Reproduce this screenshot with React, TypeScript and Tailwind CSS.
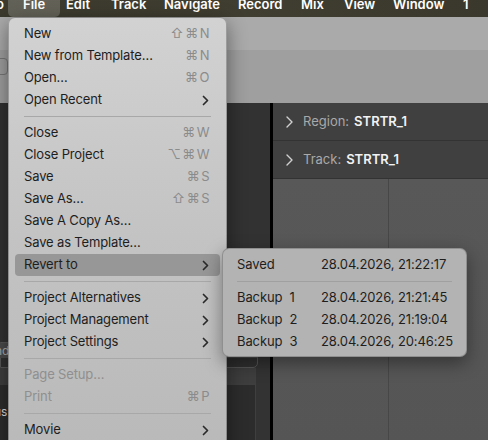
import React from "react";

type Item =
  | { sep: true }
  | { sep?: false; label: string; keys?: string; sub?: boolean; disabled?: boolean; active?: boolean };

const fileMenu: Item[] = [
  { label: "New", keys: "⇧⌘N" },
  { label: "New from Template…", keys: "⌘N" },
  { label: "Open…", keys: "⌘O" },
  { label: "Open Recent", sub: true },
  { sep: true },
  { label: "Close", keys: "⌘W" },
  { label: "Close Project", keys: "⌥⌘W" },
  { label: "Save", keys: "⌘S" },
  { label: "Save As…", keys: "⇧⌘S" },
  { label: "Save A Copy As…" },
  { label: "Save as Template…" },
  { label: "Revert to", sub: true, active: true },
  { sep: true },
  { label: "Project Alternatives", sub: true },
  { label: "Project Management", sub: true },
  { label: "Project Settings", sub: true },
  { sep: true },
  { label: "Page Setup…", disabled: true },
  { label: "Print", keys: "⌘P", disabled: true },
  { sep: true },
  { label: "Movie", sub: true },
];

const backups = [
  { label: "Backup\u00a0\u00a01", date: "28.04.2026, 21:21:45" },
  { label: "Backup\u00a0\u00a02", date: "28.04.2026, 21:19:04" },
  { label: "Backup\u00a0\u00a03", date: "28.04.2026, 20:46:25" },
];

// menu bar titles with the width each one takes up to the next title
const menuBar = [
  { name: "Edit", w: "w-[45px]" },
  { name: "Track", w: "w-[53px]" },
  { name: "Navigate", w: "w-[74px]" },
  { name: "Record", w: "w-[63px]" },
  { name: "Mix", w: "w-[43px]" },
  { name: "View", w: "w-[49px]" },
  { name: "Window", w: "w-[70px]" },
  { name: "1", w: "w-[20px]" },
];

const Chevron = ({ className = "" }: { className?: string }) => (
  <svg width="7" height="11" viewBox="0 0 7 11" className={className}>
    <path d="M1.5 1.5 L5.5 5.5 L1.5 9.5" fill="none" stroke="currentColor" strokeWidth="1.7" strokeLinecap="round" strokeLinejoin="round" />
  </svg>
);

const InspectorRow = ({ label, value }: { label: string; value: string }) => (
  <div className="h-[38px] flex items-center pl-[12px] border-b border-[#333] bg-[#404040]">
    <svg width="9" height="14" viewBox="0 0 9 14" className="text-[#d0d0d0]">
      <path d="M2 2 L7 7 L2 12" fill="none" stroke="currentColor" strokeWidth="1.4" strokeLinecap="round" strokeLinejoin="round" />
    </svg>
    <span className="ml-[9px] text-[13px] text-[#a9a9a9]">{label}</span>
    <span className="ml-[5px] text-[13px] font-semibold text-[#f2f2f2]">{value}</span>
  </div>
);

export default function App() {
  return (
    <div className="relative w-[488px] h-[440px] overflow-hidden bg-[#2f2f2f] font-['Inter','DejaVu_Sans',sans-serif] antialiased">
      {/* menu bar */}
      <div className="h-[17px] overflow-hidden bg-gradient-to-r from-[#3b3a2d] via-[#403d31] to-[#3a382c]">
        <div className="-mt-[8px] h-[25px] flex items-center text-[13px] font-semibold text-white whitespace-nowrap">
          <span className="-ml-[4px] w-[12px] overflow-hidden">o</span>
          <span className="w-[52px] shrink-0 h-full pl-[15px] flex items-center rounded-[5px] bg-white/20">File</span>
          <div className="flex items-center ml-[6px]">
            {menuBar.map((m) => (
              <span key={m.name} className={`${m.w} shrink-0`}>
                {m.name}
              </span>
            ))}
          </div>
        </div>
      </div>

      {/* toolbar */}
      <div className="h-[86px] flex flex-col bg-[#a8a8a8]">
        <div className="h-[33px] bg-[#aaaaaa]" />
        <div className="flex-1 bg-[#9f9f9f] pt-[8px]">
          <div className="w-[26px] h-[17px] -ml-[18px] rounded-[4px] border border-[#777]" />
        </div>
      </div>

      {/* main area */}
      <div className="flex h-[337px]">
        <div className="w-[270px] flex flex-col bg-[#323232]">
          <div className="h-[239px]" />
          <div className="h-[26px] mr-[12px] rounded-br-[5px] border border-[#565656] bg-[#303030]">
            <div className="h-[15px] bg-[#4a4a4a] text-[12px] leading-[15px] text-[#aaa] -ml-[6px]">nd</div>
          </div>
          <div className="flex-1 flex">
            <div className="w-[256px] border-r border-[#3f3f3f] bg-[#2c2c2c] flex flex-col">
              <div className="h-[17px] bg-[#3e3e3e]" />
              <div className="mt-[18px] -ml-[6px] text-[12px] text-[#ddd]">us</div>
            </div>
            <div className="flex-1 bg-[#333]" />
          </div>
        </div>
        <div className="w-[3px] bg-black" />
        <div className="flex-1 flex flex-col">
          <InspectorRow label="Region:" value="STRTR_1" />
          <InspectorRow label="Track:" value="STRTR_1" />
          <div className="flex-1 flex bg-gradient-to-b from-[#585858] to-[#555555]">
            <div className="w-[116px] border-r border-[#474747]" />
            <div className="flex-1" />
          </div>
        </div>
      </div>

      {/* File menu */}
      <div className="absolute left-[8px] top-[17px] w-[219px] h-[440px] rounded-[7px] border border-black/25 bg-gradient-to-b from-[#d2d2d2] via-[#c3c3c3] to-[#b9b9b9] shadow-[0_6px_20px_rgba(0,0,0,0.45)] px-[6px] pt-[5px] text-[13px] tracking-[-0.15px]">
        {fileMenu.map((it, i) =>
          it.sep ? (
            <div key={i} className="h-[11px] flex items-center px-[9px]">
              <div className="h-px w-full bg-[#a8a8a8]" />
            </div>
          ) : (
            <div
              key={i}
              className={`h-[22px] flex items-center justify-between pl-[9px] pr-[10px] rounded-[4px] whitespace-nowrap ${it.active ? "bg-[#979797]" : ""} ${it.disabled ? "text-[#8f8f8f]" : "text-[#1e1e1e]"}`}
            >
              <span>{it.label}</span>
              {it.keys && <span className="text-[#8b8b8b] tracking-[1.5px] -mr-[1px]">{it.keys}</span>}
              {it.sub && <Chevron className="text-[#2a2a2a] mr-[1px]" />}
            </div>
          )
        )}
      </div>

      {/* Revert to submenu */}
      <div className="absolute left-[222px] top-[248px] w-[245px] h-[109px] rounded-[7px] border border-black/20 bg-[#b3b3b3] shadow-[0_6px_18px_rgba(0,0,0,0.4)] px-[14px] pt-[5px] text-[13px] text-[#1e1e1e] whitespace-nowrap tracking-[-0.1px]">
        <div className="h-[22px] flex items-center">
          <span className="w-[84px] shrink-0">Saved</span>
          <span>28.04.2026, 21:22:17</span>
        </div>
        <div className="h-[11px] flex items-center">
          <div className="h-px w-full bg-[#a0a0a0]" />
        </div>
        {backups.map((b) => (
          <div key={b.label} className="h-[22px] flex items-center">
            <span className="w-[84px] shrink-0">{b.label}</span>
            <span>{b.date}</span>
          </div>
        ))}
      </div>
    </div>
  );
}
